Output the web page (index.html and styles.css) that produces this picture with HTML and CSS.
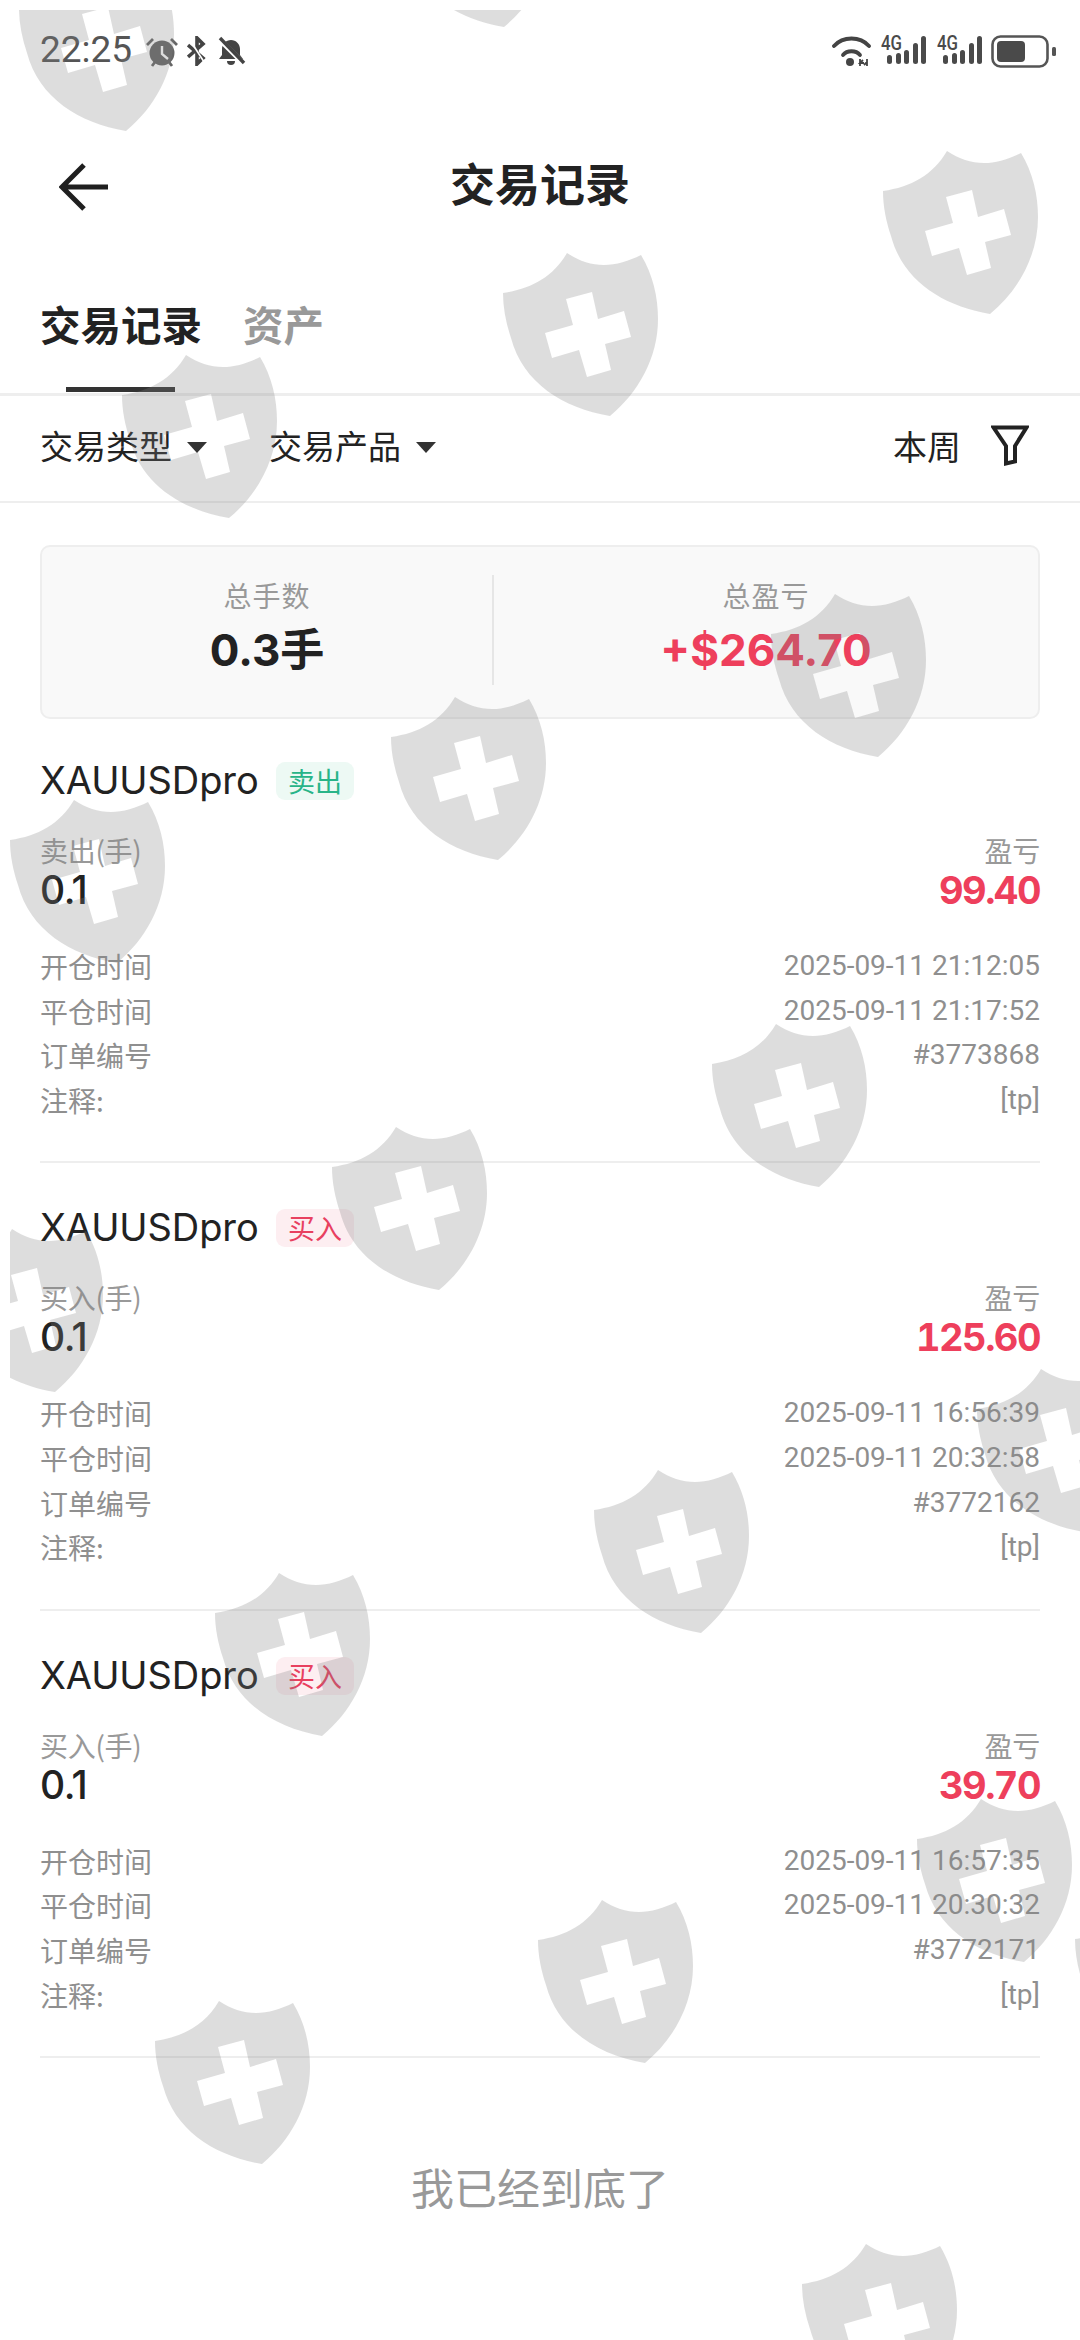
FILE: index.html
```html
<!DOCTYPE html>
<html lang="zh">
<head>
<meta charset="utf-8">
<title>交易记录</title>
<link rel="stylesheet" href="styles.css">
</head>
<body>
<div class="page">
  <div class="status">
    <div class="status-left">
      <span class="time">22:25</span>
      <svg class="ic-alarm" width="34" height="30" viewBox="0 0 34 30"><circle cx="17" cy="16" r="12.500" fill="#666"/><path d="M17 9v8l6 5" fill="none" stroke="#fff" stroke-width="2.4"/><path d="M2 8l6-6M32 8l-6-6M7 29l3-4M27 29l-3-4" stroke="#666" stroke-width="2.8" fill="none"/></svg>
      <svg class="ic-bt" width="20" height="30" viewBox="0 0 20 30"><path d="M1 9l15 13-6 6V2l6 6L1 21" fill="none" stroke="#444" stroke-width="3.600"/><path d="M1 1l18 28" stroke="#fff" stroke-width="1.600"/></svg>
      <svg class="ic-bell" width="30" height="30" viewBox="0 0 30 30"><path d="M3 23l3-4V13c0-5 4-9 9-9s9 4 9 9v6l3 4z" fill="#444"/><path d="M11 25a4 4 0 0 0 8 0z" fill="#444"/><path d="M3 3l24 24" stroke="#fff" stroke-width="5"/><path d="M4 2l24 25" stroke="#444" stroke-width="3.400"/></svg>
    </div>
    <div class="status-right">
      <svg class="ic-wifi" width="40" height="32" viewBox="0 0 40 32"><path d="M2 11C11 1 28 1 37 11" fill="none" stroke="#444" stroke-width="3.800" stroke-linecap="round"/><path d="M11 20c4-5 13-5 17 0" fill="none" stroke="#444" stroke-width="3.800" stroke-linecap="round"/><circle cx="18" cy="27" r="4" fill="#444"/><path d="M28 24v7M35 24v7M31 25l-3 3h4M32 30l3-3" stroke="#444" stroke-width="1.800" fill="none"/></svg>
      <svg class="ic-sig" width="46" height="32" viewBox="0 0 46 32"><text class="sig-text" x="1" y="15" textLength="21" lengthAdjust="spacingAndGlyphs">4G</text><rect x="7" y="20" width="5" height="9" rx="2.500"/><rect x="16" y="18" width="5" height="11" rx="2.500"/><rect x="24" y="15" width="5" height="14" rx="2.500"/><rect x="33" y="8" width="5" height="21" rx="2.500"/><rect x="41" y="1" width="5" height="28" rx="2.500"/></svg>
      <svg class="ic-sig ic-sig2" width="46" height="32" viewBox="0 0 46 32"><text class="sig-text" x="1" y="15" textLength="21" lengthAdjust="spacingAndGlyphs">4G</text><rect x="7" y="20" width="5" height="9" rx="2.500"/><rect x="16" y="18" width="5" height="11" rx="2.500"/><rect x="24" y="15" width="5" height="14" rx="2.500"/><rect x="33" y="8" width="5" height="21" rx="2.500"/><rect x="41" y="1" width="5" height="28" rx="2.500"/></svg>
      <svg class="ic-batt" width="66" height="33" viewBox="0 0 66 33"><rect x="2.500" y="1.500" width="55" height="30" rx="8" fill="none" stroke="#555" stroke-width="2.600"/><rect x="7" y="6" width="28" height="21" rx="4" fill="#4a4a4a"/><rect x="62" y="12" width="4" height="9" rx="1.500" fill="#555"/></svg>
    </div>
  </div>

  <header class="nav">
    <svg class="back" width="50" height="48" viewBox="0 0 50 48"><path d="M25 2L3 24l22 22M3 24h46" fill="none" stroke="#1f1f1f" stroke-width="5"/></svg>
    <h1 class="nav-title">交易记录</h1>
  </header>

  <div class="tabs">
    <span class="tab tab-on">交易记录</span>
    <span class="tab">资产</span>
  </div>

  <div class="filters">
    <span class="filter">交易类型<i class="caret"></i></span>
    <span class="filter">交易产品<i class="caret"></i></span>
    <span class="filter-right">本周
      <svg width="38" height="41" viewBox="0 0 38 41"><path d="M2.500 2.500h33L24 21v15.500l-9 2V21z" fill="none" stroke="#222" stroke-width="4"/></svg>
    </span>
  </div>

  <section class="summary">
    <div class="sum-cell"><div class="sum-label">总手数</div><div class="sum-val">0.3手</div></div>
    <div class="sum-cell sum-div"><div class="sum-label">总盈亏</div><div class="sum-val red">+$264.70</div></div>
  </section>

  <article class="rec">
    <div class="rec-name"><span class="sym">XAUUSDpro</span><span class="badge sell">卖出</span></div>
    <div class="rec-main">
      <div><div class="lbl">卖出(手)</div><div class="lots">0.1</div></div>
      <div class="right"><div class="lbl">盈亏</div><div class="pnl">99.40</div></div>
    </div>
    <dl class="details">
      <div><dt>开仓时间</dt><dd>2025-09-11 21:12:05</dd></div>
      <div><dt>平仓时间</dt><dd>2025-09-11 21:17:52</dd></div>
      <div><dt>订单编号</dt><dd>#3773868</dd></div>
      <div><dt>注释:</dt><dd>[tp]</dd></div>
    </dl>
  </article>

  <article class="rec">
    <div class="rec-name"><span class="sym">XAUUSDpro</span><span class="badge buy">买入</span></div>
    <div class="rec-main">
      <div><div class="lbl">买入(手)</div><div class="lots">0.1</div></div>
      <div class="right"><div class="lbl">盈亏</div><div class="pnl">125.60</div></div>
    </div>
    <dl class="details">
      <div><dt>开仓时间</dt><dd>2025-09-11 16:56:39</dd></div>
      <div><dt>平仓时间</dt><dd>2025-09-11 20:32:58</dd></div>
      <div><dt>订单编号</dt><dd>#3772162</dd></div>
      <div><dt>注释:</dt><dd>[tp]</dd></div>
    </dl>
  </article>

  <article class="rec">
    <div class="rec-name"><span class="sym">XAUUSDpro</span><span class="badge buy">买入</span></div>
    <div class="rec-main">
      <div><div class="lbl">买入(手)</div><div class="lots">0.1</div></div>
      <div class="right"><div class="lbl">盈亏</div><div class="pnl">39.70</div></div>
    </div>
    <dl class="details">
      <div><dt>开仓时间</dt><dd>2025-09-11 16:57:35</dd></div>
      <div><dt>平仓时间</dt><dd>2025-09-11 20:30:32</dd></div>
      <div><dt>订单编号</dt><dd>#3772171</dd></div>
      <div><dt>注释:</dt><dd>[tp]</dd></div>
    </dl>
  </article>

  <div class="end">我已经到底了</div>

  <svg class="watermark" width="1070" height="2330" viewBox="10 10 1070 2330">
    <defs>
      <path id="shield" fill-rule="evenodd" d="M0 40C28 36 50 24 64 0C76 8 88 12 101 12C113 12 126 8 138 2C150 22 155 44 155 66C155 105 135 140 107 163C60 155 20 130 8 85C3 70 0 55 0 40ZM63 46L89 39L95 66L121 58L128 84L102 91L108 117L84 124L76 97L49 105L42 80L70 72Z"/>
    </defs>
    <use href="#shield" x="19" y="-32"/>
    <use href="#shield" x="397" y="-136"/>
    <use href="#shield" x="883" y="151"/>
    <use href="#shield" x="503" y="253"/>
    <use href="#shield" x="122" y="355"/>
    <use href="#shield" x="771" y="594"/>
    <use href="#shield" x="391" y="697"/>
    <use href="#shield" x="10" y="800"/>
    <use href="#shield" x="712" y="1024"/>
    <use href="#shield" x="332" y="1127"/>
    <use href="#shield" x="-52" y="1229"/>
    <use href="#shield" x="977" y="1369"/>
    <use href="#shield" x="594" y="1470"/>
    <use href="#shield" x="215" y="1573"/>
    <use href="#shield" x="917" y="1799"/>
    <use href="#shield" x="538" y="1900"/>
    <use href="#shield" x="1075" y="1899"/>
    <use href="#shield" x="155" y="2001"/>
    <use href="#shield" x="802" y="2244"/>
  </svg>
</div>
</body>
</html>
```
FILE: styles.css
```css
* { box-sizing: border-box; }
html, body { margin: 0; padding: 0; background: #fff; }
body { font-family: "Noto Sans CJK SC", "Noto Sans", sans-serif; color: #222; }
.page { position: relative; width: 1080px; height: 2340px; overflow: hidden; background: #fff; }

.status { height: 102px; display: flex; justify-content: space-between; align-items: center; padding: 0 24px 0 40px; }
.status-left { display: flex; align-items: center; }
.time { font: 400 37px/44px Roboto, sans-serif; color: #555; width: 105px; margin-top: -2px; }
.ic-bt { margin-left: 8px; }
.ic-bell { margin-left: 9px; }
.ic-alarm { margin-top: 2px; }
.status-right { display: flex; align-items: center; gap: 8px; }
.ic-sig { overflow: visible; }
.ic-sig2 { margin-left: 2px; }
.ic-sig rect { fill: #4a4a4a; }
.sig-text { font: 500 21px Roboto, sans-serif; fill: #4a4a4a; }

.nav { height: 166px; position: relative; display: flex; align-items: center; justify-content: center; padding-bottom: 5px; }
.back { position: absolute; left: 59px; top: 61px; }
.nav-title { margin: 0; font-size: 45px; line-height: 60px; font-weight: 700; color: #222; }

.tabs { height: 125px; display: flex; gap: 41px; padding: 28px 0 0 40px; }
.tab { position: relative; height: 97px; font-size: 40.5px; line-height: 56px; font-weight: 700; color: #999; }
.tab-on { color: #222; }
.tab-on::after { content: ""; position: absolute; left: 26px; bottom: 1px; width: 109px; height: 5px; background: #333; }

.filters { height: 110px; border-top: 3px solid #eee; border-bottom: 2px solid #eee; display: flex; align-items: center; padding: 0 51px 7px 40px; gap: 62px; font-size: 33px; color: #222; }
.filter { display: flex; align-items: center; gap: 15px; }
.caret { display: block; width: 0; height: 0; border-left: 10px solid transparent; border-right: 10px solid transparent; border-top: 11px solid #333; margin-top: 4px; }
.filter-right { margin-left: auto; display: flex; align-items: center; gap: 30px; font-size: 34px; }

.summary { margin: 42px 40px -3px; height: 174px; display: grid; grid-template-columns: 451fr 547fr; background: #f9f9f9; border: 2px solid #eee; border-radius: 10px; align-items: start; padding-top: 28px; }
.sum-cell { height: 110px; text-align: center; }
.sum-div { border-left: 2px solid #e6e6e6; }
.sum-label { font-size: 28px; line-height: 40px; color: #999; letter-spacing: 1px; }
.sum-val { margin-top: 5px; font: 700 44px/60px Inter, "Noto Sans CJK SC", sans-serif; color: #222; }
.red { color: #ee3f5c; }

.rec { margin: 0 40px; padding: 42px 0 39px; border-bottom: 2px solid #eee; }
.rec-name { height: 44px; display: flex; align-items: center; }
.sym { font: 400 38px/44px Inter, sans-serif; letter-spacing: -0.1px; color: #222; width: 236px; }
.badge { height: 38px; width: 78px; margin-top: 2px; border-radius: 9px; font-size: 27px; line-height: 38px; text-align: center; }
.sell { background: #edf9f4; color: #28b488; }
.buy { background: #fdeef1; color: #e8405f; }
.rec-main { margin-top: 30px; display: flex; justify-content: space-between; }
.right { text-align: right; }
.lbl { font-size: 28px; line-height: 36px; color: #999; letter-spacing: -0.3px; }
.lots { font: 500 39px/44px Inter, sans-serif; letter-spacing: -0.5px; color: #222; }
.pnl { font: 700 38px/44px Inter, sans-serif; font-variant-numeric: tabular-nums; letter-spacing: -1.5px; color: #ee3f5c; }
.details { margin: 32px 0 0; }
.details > div { display: flex; justify-content: space-between; height: 44.6px; line-height: 44.6px; font-size: 28px; color: #8f8f8f; }
.details dt, .details dd { margin: 0; }
.details dd { font-family: Roboto, sans-serif; }

.end { margin-top: 98px; height: 60px; line-height: 60px; text-align: center; font-size: 43px; color: #999; }

.watermark { position: absolute; left: 10px; top: 10px; pointer-events: none; fill: rgba(130,130,130,.27); }
```
